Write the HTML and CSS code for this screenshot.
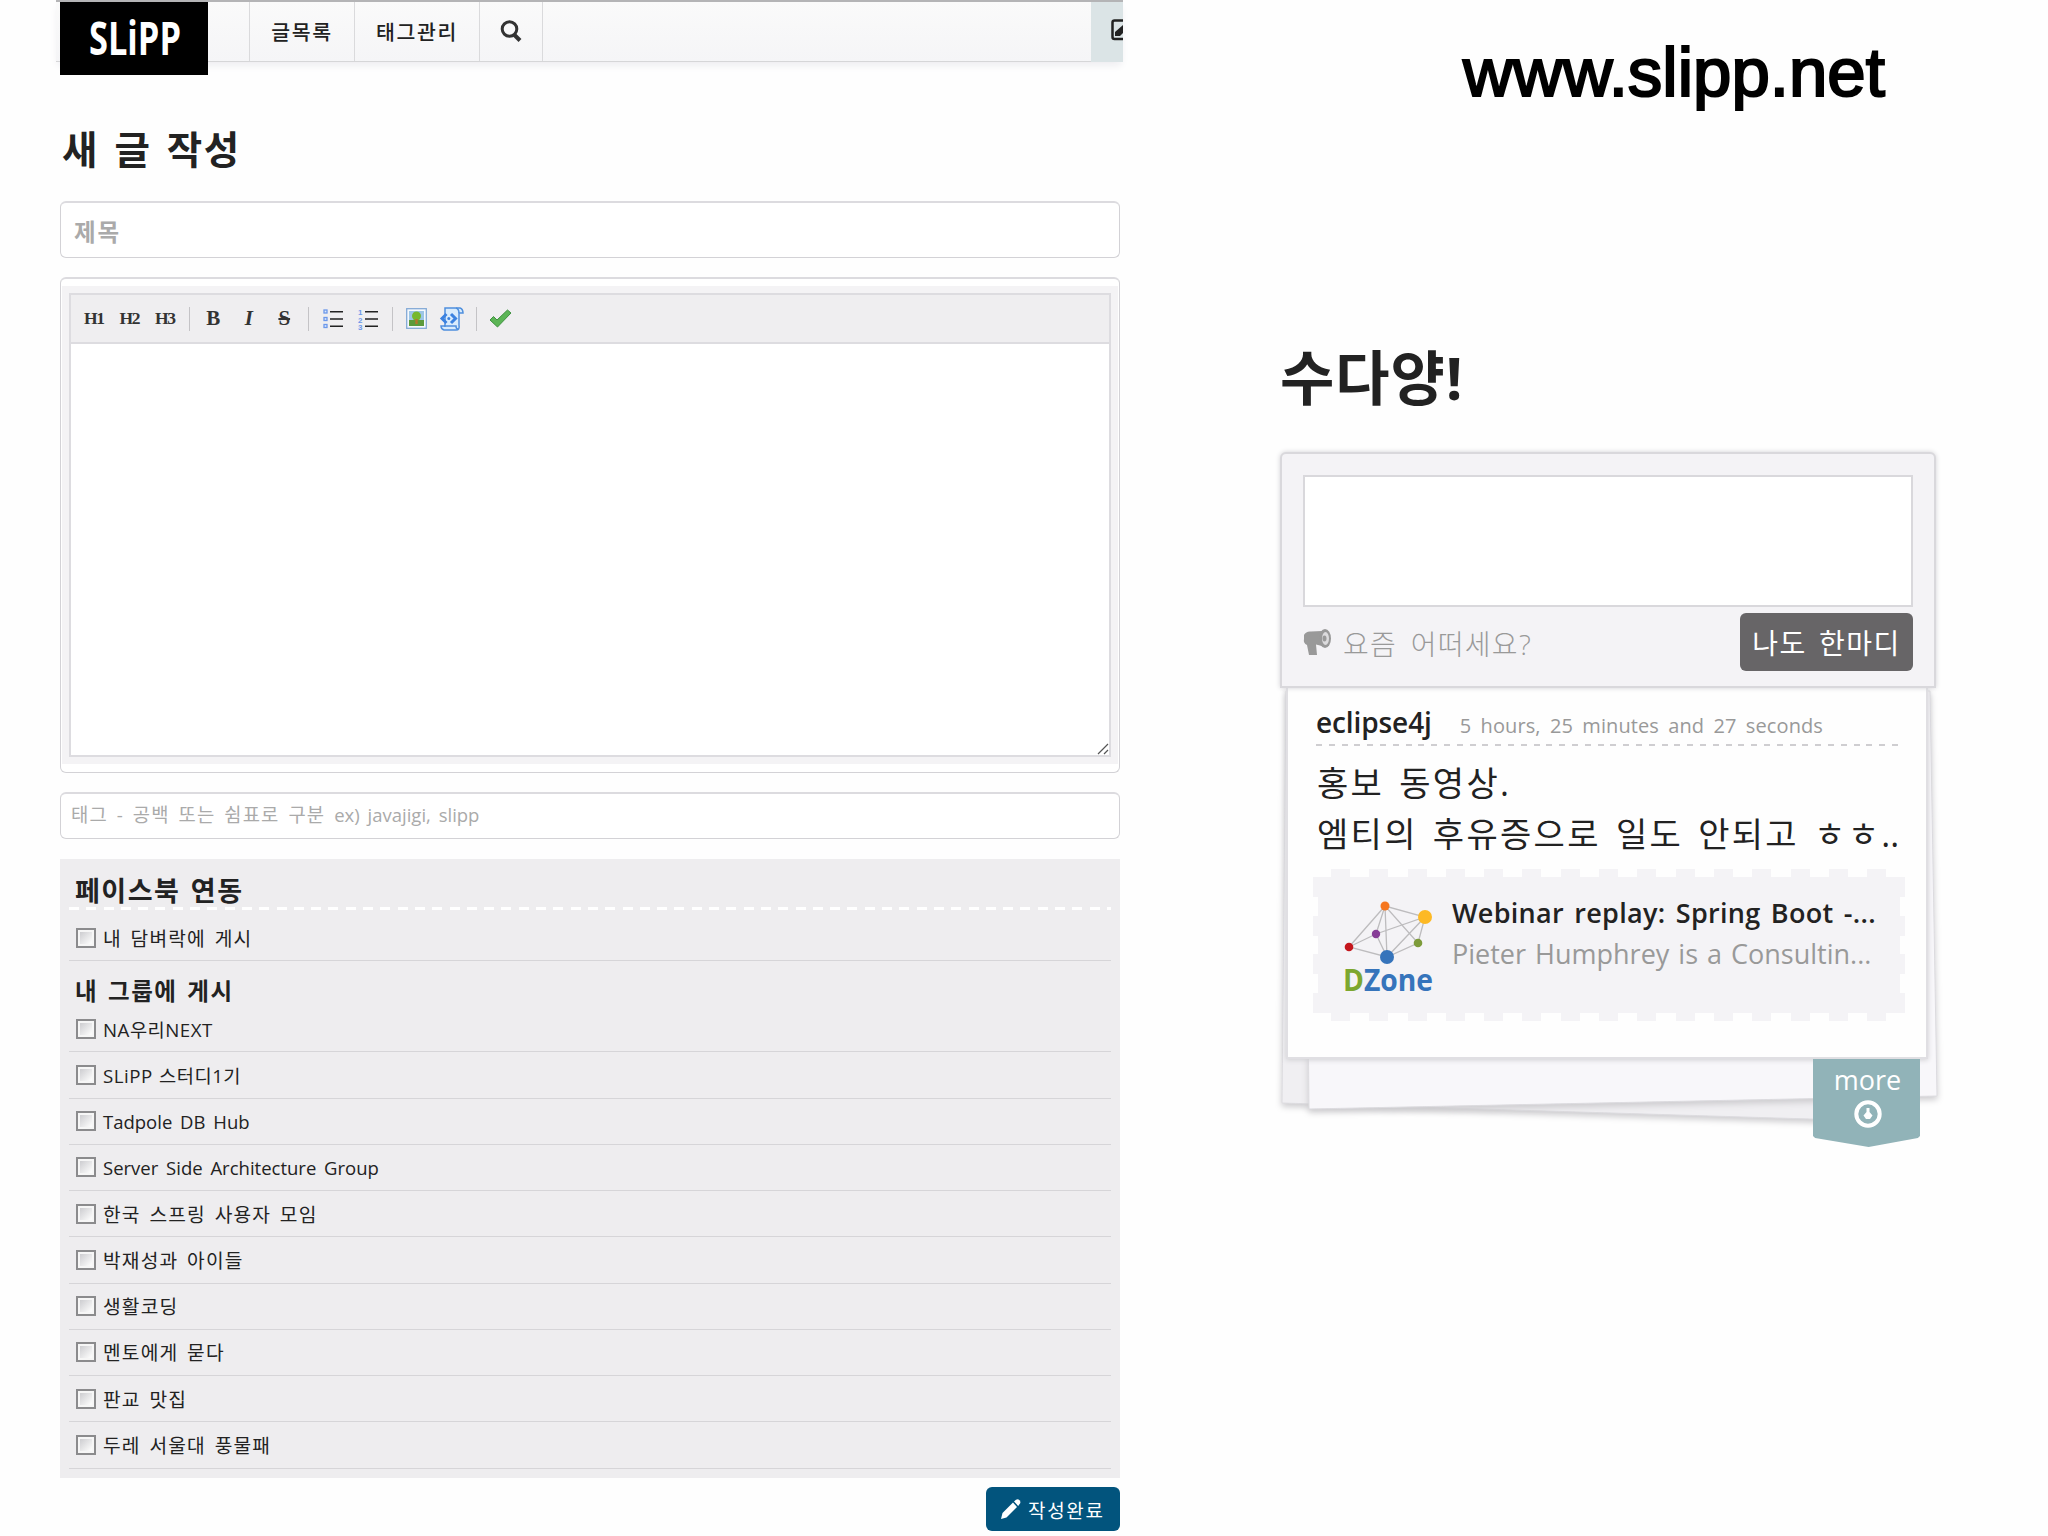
FILE: index.html
```html
<!DOCTYPE html>
<html lang="ko">
<head>
  <meta charset="UTF-8" />
  <meta name="viewport" content="width=device-width, initial-scale=1.0" />
  <title>SLiPP</title>
  <link rel="stylesheet" href="styles.css">
</head>
<body>
  <div class="page">
    <main class="write">
      <nav class="gnb">
        <a class="logo" href="#">
          <svg width="148" height="73" viewBox="0 0 148 73"><text x="29" y="53" textLength="92" lengthAdjust="spacingAndGlyphs">SLiPP</text></svg>
        </a>
        <a class="menu menu-list" href="#">글목록</a>
        <a class="menu menu-tag" href="#">태그관리</a>
        <a class="menu menu-search" href="#">
          <svg width="22" height="22" viewBox="0 0 22 22"><circle cx="9.5" cy="9" r="7.3" fill="none" stroke="#333" stroke-width="3"/><path d="M14 14.500l6 6" stroke="#333" stroke-width="4"/></svg>
        </a>
        <span class="menu-space"></span>
        <a class="menu-write" href="#">
          <svg width="12" height="22" viewBox="0 0 12 22"><path d="M13 1.500H3.500Q1.500 1.500 1.500 3.500V18Q1.500 20 3.500 20H13" fill="none" stroke="#222" stroke-width="2.500"/><path d="M4 17v-4L12 6v8l-3 3z" fill="#222"/></svg>
        </a>
      </nav>

      <h1>새 글 작성</h1>
      <div class="field title-field">제목</div>

      <div class="editor">
        <div class="editor-inner">
          <div class="toolbar">
            <span class="tool head">H1</span>
            <span class="tool head">H2</span>
            <span class="tool head">H3</span>
            <i class="sep"></i>
            <span class="tool">B</span>
            <span class="tool italic">I</span>
            <span class="tool strike">S</span>
            <i class="sep"></i>
            <span class="tool">
              <svg width="20" height="20" viewBox="0 0 20 20"><g fill="#dce8fb" stroke="#6c98ea" stroke-width="1.300"><rect x="1" y="1" width="3" height="3"/><rect x="1" y="8.500" width="3" height="3"/><rect x="1" y="15.500" width="3" height="3"/></g><path d="M7 2.800h13M7 10h13M7 17.300h13" stroke="#222" stroke-width="1.600"/></svg>
            </span>
            <span class="tool">
              <svg width="20" height="22" viewBox="0 0 20 22"><g class="nums"><text x="0" y="7">1</text><text x="0" y="14.500">2</text><text x="0" y="22">3</text></g><path d="M7 3.800h13M7 11h13M7 18.300h13" stroke="#222" stroke-width="1.600"/></svg>
            </span>
            <i class="sep"></i>
            <span class="tool">
              <svg width="21" height="21" viewBox="0 0 21 21"><rect x=".7" y=".7" width="19.600" height="19.600" fill="#f5f9fd" stroke="#83a9d6" stroke-width="1.300"/><path fill="#9cc5e6" d="M3 3h15v9H3z"/><path fill="#5c9a3c" d="M3 12h15v6H3z"/><circle cx="10.500" cy="8" r="4.500" fill="#76b82c"/><path d="M10.500 11v5" stroke="#b5752c" stroke-width="2.400"/></svg>
            </span>
            <span class="tool">
              <svg width="24" height="24" viewBox="0 0 24 24"><path d="M5 1h15q3 1 3 5h-4v12q1 5-3 5H4q-3-1-3-4h4z" fill="#d8ebfc" stroke="#4f8fdd" stroke-width="1.500"/><path d="M19 6q0-4-3-5M4 19h12q0 3 2 3" fill="none" stroke="#4f8fdd" stroke-width="1.500"/><path d="M6.500 7L2 11.500 6.500 16M11 7l4.500 4.500L11 16" fill="none" stroke="#3b82e0" stroke-width="3"/><circle cx="8.800" cy="11.500" r="1.500" fill="#3b82e0"/></svg>
            </span>
            <i class="sep"></i>
            <span class="tool">
              <svg width="23" height="19" viewBox="0 0 23 19"><path d="M1 11l3.500-3.500L8 11 18.500 1 22 4 8.500 18z" fill="#5cb556" stroke="#3f9140"/></svg>
            </span>
          </div>
          <div class="textarea">
            <svg width="12" height="12" viewBox="0 0 12 12"><path d="M1 11L11 1M7 11l4-4" stroke="#555" stroke-width="1.200"/></svg>
          </div>
        </div>
      </div>

      <div class="field tag-field">태그 - 공백 또는 쉼표로 구분 <span>ex) javajigi, slipp</span></div>

      <section class="facebook">
        <h2>페이스북 연동</h2>
        <label class="row first"><input type="checkbox">내 담벼락에 게시</label>
        <h3>내 그룹에 게시</h3>
        <label class="row mixed"><input type="checkbox">NA우리NEXT</label>
        <label class="row mixed"><input type="checkbox">SLiPP 스터디1기</label>
        <label class="row latin"><input type="checkbox">Tadpole DB Hub</label>
        <label class="row latin"><input type="checkbox">Server Side Architecture Group</label>
        <label class="row"><input type="checkbox">한국 스프링 사용자 모임</label>
        <label class="row"><input type="checkbox">박재성과 아이들</label>
        <label class="row"><input type="checkbox">생활코딩</label>
        <label class="row"><input type="checkbox">멘토에게 묻다</label>
        <label class="row"><input type="checkbox">판교 맛집</label>
        <label class="row"><input type="checkbox">두레 서울대 풍물패</label>
      </section>

      <div class="actions">
        <button class="btn-submit">
          <svg width="21" height="21" viewBox="0 0 21 21"><path d="M1 20l1.500-6L13 3.500 17 8 6.500 18.500z" fill="#fff"/><path d="M14 2.500L16 .8q2-1.200 3.500.5t.5 3.200L18.200 7z" fill="#fff"/></svg>
          <span>작성완료</span>
        </button>
      </div>
    </main>

    <aside class="side">
      <div class="site-url">www.slipp.net</div>
      <h2 class="talk-title">수다양!</h2>

      <div class="talk">
        <svg class="sheets" width="680" height="480" viewBox="0 0 680 480">
          <path class="sheet back" d="M23 20L652 20 646 451 19 432z"/>
          <path class="sheet front" d="M42 20L667 20 674 425 46 438z"/>
        </svg>

        <div class="talk-form">
          <div class="talk-input"></div>
          <div class="talk-bar">
            <svg width="29" height="28" viewBox="0 0 29 28"><path d="M1 7q2-4 7-3.500L19 3v15l-6-1.500L14 27H6L4 17Q0 15 1 11z" fill="#999"/><ellipse cx="22" cy="10.500" rx="6" ry="9.500" fill="#999"/><ellipse cx="22.500" cy="10.500" rx="3.500" ry="6.500" fill="#dcdbdd"/><ellipse cx="21.500" cy="10.500" rx="2" ry="3" fill="#999"/></svg>
            <span class="talk-hint">요즘 어떠세요?</span>
            <button class="btn-talk">나도 한마디</button>
          </div>
        </div>

        <div class="talk-card">
          <div class="talk-head">
            <strong>eclipse4j</strong>
            <time>5 hours, 25 minutes and 27 seconds</time>
          </div>
          <p class="talk-text">홍보 동영상.<br>엠티의 후유증으로 일도 안되고 ㅎㅎ<span>..</span></p>
          <a class="link-box" href="#">
            <svg width="92" height="96" viewBox="0 0 92 96">
              <path d="M42 8L6 49 44 59 75 45 42 8 82 19 44 59 33 36 42 8 44 59M6 49L33 36 82 19 75 45" fill="none" stroke="#bdbcbe" stroke-width="1.300"/>
              <circle cx="42" cy="8" r="4.500" fill="#f5761f"/><circle cx="82" cy="19" r="7" fill="#fdb924"/><circle cx="33" cy="36" r="4.200" fill="#873d97"/><circle cx="6" cy="49" r="4.300" fill="#c4161c"/><circle cx="75" cy="45" r="4.300" fill="#7d9b3a"/><circle cx="44" cy="59" r="7" fill="#3674bb"/>
              <text class="dzone" x="0" y="93" textLength="90" lengthAdjust="spacingAndGlyphs"><tspan fill="#7da72f">D</tspan><tspan fill="#3674bb">Zone</tspan></text>
            </svg>
            <span class="link-text">
              <b>Webinar replay: Spring Boot -...</b>
              <span>Pieter Humphrey is a Consultin...</span>
            </span>
          </a>
        </div>

        <a class="more" href="#">
          more
          <svg width="28" height="28" viewBox="0 0 28 28"><circle cx="14" cy="14" r="11.700" fill="none" stroke="#fff" stroke-width="4"/><path d="M12.500 8h3v4l3 3.500L16 19h-4l-2.500-3.500 3-3.500z" fill="#fff"/></svg>
        </a>
      </div>
    </aside>
  </div>
</body>
</html>
```
FILE: styles.css
```css
* {
  box-sizing: border-box;
}

body {
  margin: 0;
  background: #fefefe;
  color: #222;
  font-family: "Open Sans", "Noto Sans CJK KR", sans-serif;
  font-size: 18px;
}

a {
  color: inherit;
  text-decoration: none;
}

svg {
  display: block;
  flex: none;
  overflow: visible;
}

h1, h2, h3, p {
  margin: 0;
}

.page {
  display: flex;
  height: 1536px;
  overflow: hidden;
}

.write {
  width: 1060px;
  margin-left: 60px;
}

/* top navigation */
.gnb {
  display: flex;
  align-items: flex-start;
  width: 1067px;
  height: 62px;
  margin-left: -4px;
  padding-left: 4px;
  border-top: 2px solid #b4b4b6;
  border-bottom: 1px solid #d6d6d8;
  background: linear-gradient(#fafafa, #f5f5f7);
  box-shadow: 0 5px 8px -2px #ecebef;
}

.logo {
  width: 148px;
  height: 73px;
  margin-right: 41px;
  background: #000;
  font-family: "Open Sans", sans-serif;
  font-size: 47px;
  font-weight: bold;
}

.logo text {
  fill: #fff;
}

.menu {
  display: flex;
  align-items: center;
  justify-content: center;
  height: 59px;
  padding-bottom: 1px;
  border-left: 1px solid #dadadc;
  font-size: 20.5px;
  font-weight: 500;
  letter-spacing: 1.600px;
}

.menu-list {
  width: 105px;
}

.menu-tag {
  width: 125px;
}

.menu-search {
  width: 64px;
  border-right: 1px solid #dadadc;
}

.menu-space {
  flex: 1;
}

.menu-write {
  display: flex;
  justify-content: flex-end;
  width: 32px;
  height: 60px;
  padding-top: 17px;
  background: #dbe4e6;
  overflow: hidden;
}

h1 {
  display: flex;
  align-items: center;
  height: 42px;
  margin: 64px 0 33px 2px;
  font-size: 38.500px;
  font-weight: bold;
  letter-spacing: 1.500px;
  word-spacing: 4px;
  white-space: pre;
}

.field {
  display: flex;
  align-items: center;
  border: 1px solid #d3d2d6;
  border-top: 2px solid #dcdbdf;
  border-radius: 6px;
  background: #fff;
  color: #aaa;
}

.title-field {
  height: 57px;
  padding: 1px 13px 0;
  font-size: 23.500px;
  font-weight: bold;
  letter-spacing: 2px;
}

.tag-field {
  height: 47px;
  margin-top: 19px;
  padding: 0 0 4px 10px;
  font-size: 18.800px;
  letter-spacing: 1.100px;
  word-spacing: 3px;
  white-space: pre;
}

.tag-field span {
  font-size: 18.500px;
  letter-spacing: 0;
}

/* editor */
.editor {
  height: 496px;
  margin-top: 19px;
  padding: 7px 1px 8px;
  border: 1px solid #d3d2d6;
  border-top: 2px solid #dcdbdf;
  border-radius: 6px;
  background: #fff;
}

.editor-inner {
  display: flex;
  flex-direction: column;
  height: 478px;
  padding: 7px;
  background: #f4f3f5;
}

.toolbar {
  display: flex;
  align-items: center;
  height: 49px;
  padding-left: 5px;
  border: 2px solid #dddce0;
  border-bottom: 0;
  background: #efeef0;
}

.tool {
  display: flex;
  align-items: center;
  justify-content: center;
  width: 35.500px;
  font-family: "Liberation Serif", serif;
  font-size: 21px;
  font-weight: bold;
  color: #333;
}

.head {
  font-size: 17.500px;
  letter-spacing: -1.500px;
}

.italic {
  font-style: italic;
}

.strike {
  text-decoration: line-through;
}

.nums {
  font-family: "Liberation Sans", sans-serif;
  font-size: 8px;
  fill: #6c98ea;
}

.sep {
  width: 1px;
  height: 24px;
  margin: 0 6px;
  background: #c4c3c6;
}

.textarea {
  display: flex;
  flex: 1;
  align-items: flex-end;
  justify-content: flex-end;
  border: 2px solid #dddce0;
  background: #fff;
}

/* facebook share */
.facebook {
  height: 619px;
  margin-top: 20px;
  padding: 13px 9px 0;
  background: #eeedef;
}

.facebook h2 {
  height: 38px;
  padding-left: 6px;
  font-size: 27px;
  line-height: 38px;
  letter-spacing: 1.500px;
  word-spacing: 2px;
  background: repeating-linear-gradient(90deg, #fff 0 10px, transparent 10px 17.300px) 0 100% / 100% 3px no-repeat;
}

.facebook h3 {
  height: 45px;
  padding: 13px 0 0 6px;
  font-size: 23.500px;
  line-height: 34px;
  font-weight: bold;
  letter-spacing: 1.600px;
  word-spacing: 2px;
}

.row {
  display: flex;
  align-items: center;
  height: 46.250px;
  padding-left: 7px;
  border-bottom: 1px solid #d6d5d8;
  font-size: 19.200px;
  letter-spacing: 1.200px;
  word-spacing: 2.500px;
  white-space: pre;
}

.row.first {
  height: 51px;
  padding-top: 6px;
}

.row.mixed {
  font-size: 18.700px;
  letter-spacing: .5px;
  word-spacing: 1px;
}

.row.latin {
  font-size: 18.500px;
  letter-spacing: 0;
  word-spacing: 3px;
}

.row input {
  appearance: none;
  width: 20px;
  height: 20px;
  margin: 0 7px 0 0;
  border: 2px solid #8b8b8d;
  background: linear-gradient(135deg, #c4c4c8, #fafafa 80%);
  box-shadow: inset 0 0 0 2px #f6f6f6;
}

.actions {
  display: flex;
  justify-content: flex-end;
  margin-top: 9px;
}

.btn-submit {
  display: flex;
  align-items: center;
  gap: 7px;
  width: 134px;
  height: 44px;
  padding: 0 0 0 14px;
  border: 0;
  border-radius: 6px;
  background: #02547d;
  color: #fff;
  font: 19px "Noto Sans CJK KR", sans-serif;
  letter-spacing: 1.700px;
}

/* right side */
.side {
  width: 680px;
  margin-left: 160px;
}

.site-url {
  margin: 33px 0 0 183px;
  font: 69px/80px "Liberation Sans", Arial, sans-serif;
  color: #000;
  -webkit-text-stroke: 2.200px #000;
}

.talk-title {
  height: 80px;
  margin-top: 224px;
  font-size: 59px;
  line-height: 80px;
  letter-spacing: 1px;
}

.talk {
  position: relative;
  width: 656px;
  margin-top: 35px;
}

.sheets {
  position: absolute;
  top: 219px;
  left: -17px;
}

.sheet {
  stroke: #dddce0;
  filter: drop-shadow(0 3px 3px #cbcacd);
}

.back {
  fill: #f0eff2;
}

.front {
  fill: #f8f7fa;
}

.talk-form {
  position: relative;
  z-index: 2;
  height: 236px;
  padding: 21px 21px 0;
  border: 2px solid #d9d8dc;
  border-radius: 6px 6px 0 0;
  background: #f4f3f6;
  box-shadow: 0 0 5px #d3d2d6;
}

.talk-input {
  height: 132px;
  border: 2px solid #d9d8dc;
  background: #fff;
}

.talk-bar {
  display: flex;
  align-items: center;
  padding-top: 6px;
}

.talk-hint {
  flex: 1;
  padding: 1px 0 0 11px;
  font-size: 28px;
  color: #999;
  font-weight: 300;
  letter-spacing: 1.300px;
  word-spacing: 5px;
}

.btn-talk {
  width: 173px;
  height: 58px;
  padding: 0 0 1px;
  border: 0;
  border-radius: 6px;
  background: #676567;
  color: #fff;
  font: 28px "Noto Sans CJK KR", sans-serif;
  letter-spacing: 1.500px;
  word-spacing: 3px;
}

.talk-card {
  position: relative;
  width: 642px;
  height: 371px;
  margin-left: 6px;
  padding: 13px 23px 0 26px;
  border: 2px solid #e0dfe3;
  border-top: 0;
  background: #fefefe;
  box-shadow: 0 1px 5px #cfced2;
}

.talk-head {
  display: flex;
  align-items: baseline;
  gap: 28px;
  width: 584px;
  height: 45px;
  margin-left: 2px;
  line-height: 42px;
  background: repeating-linear-gradient(90deg, #cfced1 0 6px, transparent 6px 12.800px) 0 100% / 100% 2px no-repeat;
}

.talk-head strong {
  font-size: 28px;
  font-weight: 600;
  letter-spacing: -.1px;
}

.talk-head time {
  font-size: 20px;
  color: #999;
  letter-spacing: .1px;
  word-spacing: 4px;
}

.talk-text {
  height: 123px;
  padding: 12px 0 0 3px;
  font-size: 34px;
  line-height: 51px;
  letter-spacing: 2.300px;
  word-spacing: 4px;
  white-space: nowrap;
}

.talk-text span {
  letter-spacing: 0;
}

/* ticket shaped box, the edge tabs are painted by the gradients */
.link-box {
  display: flex;
  gap: 17px;
  width: 592px;
  height: 152px;
  margin-left: -1px;
  padding: 29px 0 0 30px;
  background:
    linear-gradient(#f4f3f6, #f4f3f6) 5px 8px / 582px 136px no-repeat,
    repeating-linear-gradient(90deg, transparent 0 18px, #f4f3f6 18px 37px, transparent 37px 38.300px) 0 0 / 575px 8px no-repeat,
    repeating-linear-gradient(90deg, transparent 0 18px, #f4f3f6 18px 37px, transparent 37px 38.300px) 0 100% / 575px 8px no-repeat,
    repeating-linear-gradient(#f4f3f6 0 20px, transparent 20px 38.700px) 0 8px / 5px 136px no-repeat,
    repeating-linear-gradient(#f4f3f6 0 20px, transparent 20px 38.700px) 100% 8px / 5px 136px no-repeat;
}

.dzone {
  font-family: "Open Sans", sans-serif;
  font-size: 31px;
  font-weight: bold;
}

.link-text {
  display: flex;
  flex-direction: column;
  font-size: 27px;
  line-height: 41px;
  white-space: nowrap;
}

.link-text b {
  margin-top: -6px;
  font-weight: 600;
  letter-spacing: .3px;
  word-spacing: 3px;
}

.link-text span {
  color: #999;
  word-spacing: 2px;
}

.more {
  position: absolute;
  top: 607px;
  right: 16px;
  width: 107px;
  height: 88px;
  display: flex;
  flex-direction: column;
  align-items: center;
  padding-left: 2px;
  background: #91b3b8;
  clip-path: polygon(0 0, 100% 0, 100% 77px, 98% 79px, 52% 100%, 2% 79px, 0 77px);
  color: #fff;
  font-size: 27px;
  line-height: 41px;
}
```
